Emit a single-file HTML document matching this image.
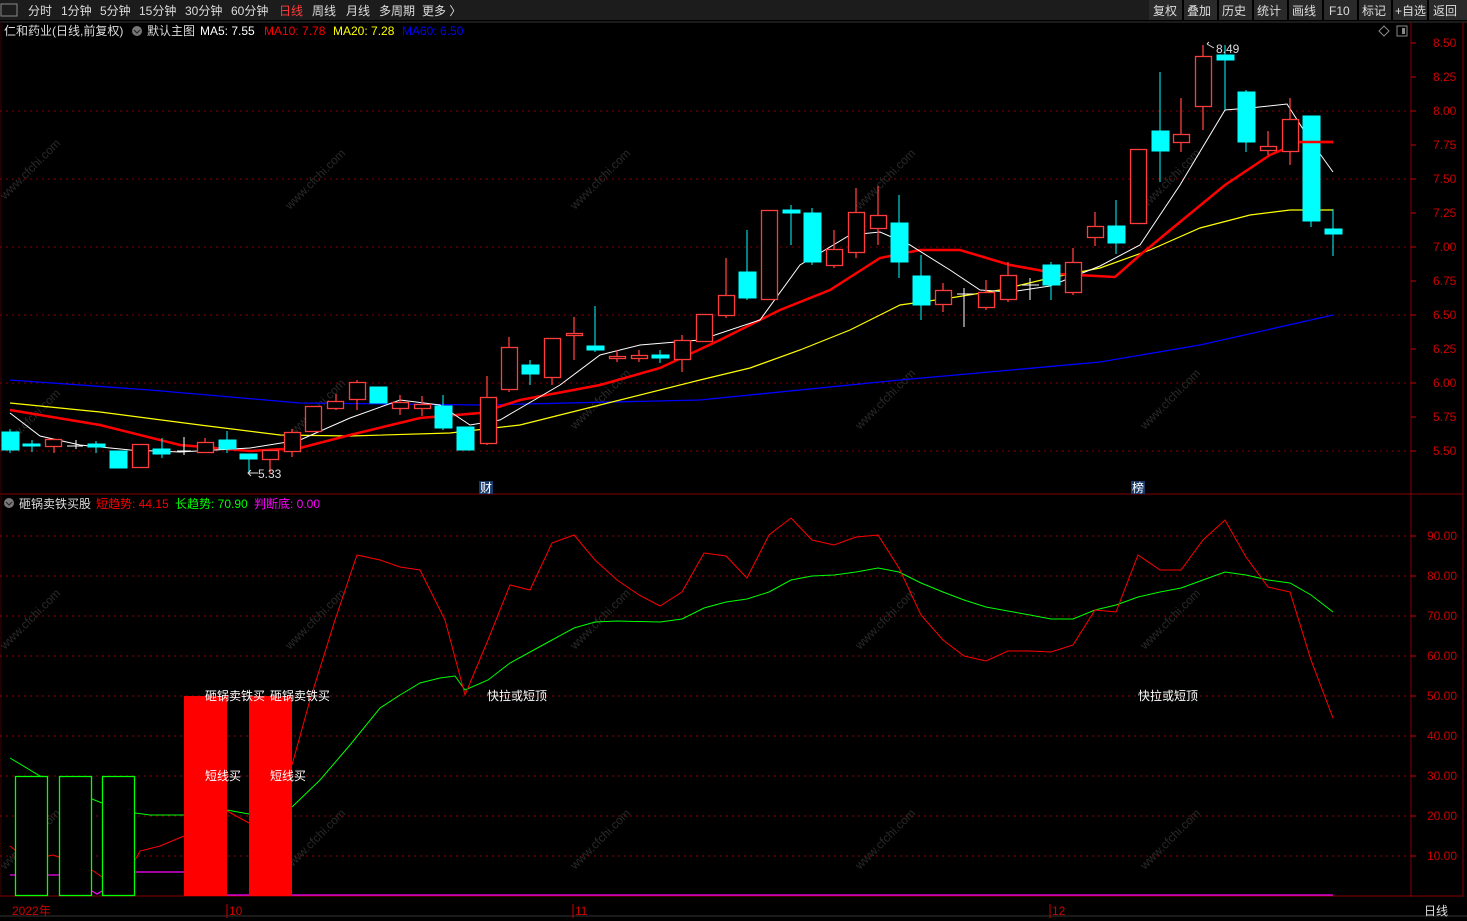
<!DOCTYPE html>
<html><head><meta charset="utf-8"><style>
html,body{margin:0;padding:0;background:#000;width:1467px;height:921px;overflow:hidden;font-family:"Liberation Sans","Noto Sans CJK SC",sans-serif;}
svg{display:block}
text{font-family:"Liberation Sans","Noto Sans CJK SC",sans-serif;font-size:12px}
</style></head><body>
<svg width="1467" height="921" viewBox="0 0 1467 921" xmlns="http://www.w3.org/2000/svg">
<rect width="1467" height="921" fill="#000"/>
<!-- top bar -->
<rect x="0" y="0" width="1467" height="20" fill="#1c1c1c"/>
<rect x="1" y="4" width="16" height="12" fill="none" stroke="#888" stroke-width="1"/>
<g fill="#ddd" font-size="12">
<text x="28" y="15">分时</text><text x="61" y="15">1分钟</text><text x="100" y="15">5分钟</text><text x="139" y="15">15分钟</text><text x="185" y="15">30分钟</text><text x="231" y="15">60分钟</text>
<text x="279" y="15" fill="#ff3c3c">日线</text><text x="312" y="15">周线</text><text x="346" y="15">月线</text><text x="379" y="15">多周期</text><text x="422" y="15">更多 〉</text>
</g>
<g fill="#ddd">
<rect x="1149" y="0" width="318" height="20" fill="#2a2a2a"/>
<text x="1153" y="15">复权</text><text x="1187" y="15">叠加</text><text x="1222" y="15">历史</text><text x="1257" y="15">统计</text><text x="1292" y="15">画线</text><text x="1329" y="15">F10</text><text x="1362" y="15">标记</text><text x="1395" y="15">+自选</text><text x="1433" y="15">返回</text>
<g stroke="#000" stroke-width="2"><line x1="1183" y1="0" x2="1183" y2="20"/><line x1="1218" y1="0" x2="1218" y2="20"/><line x1="1253" y1="0" x2="1253" y2="20"/><line x1="1288" y1="0" x2="1288" y2="20"/><line x1="1323" y1="0" x2="1323" y2="20"/><line x1="1358" y1="0" x2="1358" y2="20"/><line x1="1392" y1="0" x2="1392" y2="20"/><line x1="1428" y1="0" x2="1428" y2="20"/></g>
</g>
<!-- legend -->
<text x="4" y="35" fill="#ddd">仁和药业(日线,前复权)</text>
<circle cx="137" cy="31" r="5" fill="#777"/><path d="M134 30 l3 3 l3 -3" stroke="#222" fill="none"/>
<text x="147" y="35" fill="#ddd">默认主图</text>
<text x="200" y="35" fill="#fff">MA5: 7.55</text>
<text x="264" y="35" fill="#f00">MA10: 7.78</text>
<text x="333" y="35" fill="#ff0">MA20: 7.28</text>
<text x="402" y="35" fill="#00f">MA60: 6.50</text>
<path d="M1384 26 l5 5 l-5 5 l-5 -5z" fill="none" stroke="#888"/>
<rect x="1397" y="26" width="10" height="10" fill="none" stroke="#888"/><rect x="1402" y="28" width="3" height="6" fill="#888"/>
<!-- frame -->
<line x1="0" y1="22" x2="1467" y2="22" stroke="#333"/>
<line x1="1411" y1="22" x2="1411" y2="897" stroke="#800"/>
<line x1="1463" y1="22" x2="1463" y2="897" stroke="#800"/>
<line x1="0" y1="494" x2="1463" y2="494" stroke="#800"/>
<line x1="0" y1="896" x2="1463" y2="896" stroke="#800"/>
<line x1="1" y1="22" x2="1" y2="896" stroke="#400"/>
<!-- price grid -->
<g stroke="#800" stroke-dasharray="2,4">
<line x1="0" y1="111" x2="1411" y2="111"/><line x1="0" y1="179" x2="1411" y2="179"/><line x1="0" y1="247" x2="1411" y2="247"/><line x1="0" y1="315" x2="1411" y2="315"/><line x1="0" y1="383" x2="1411" y2="383"/><line x1="0" y1="451" x2="1411" y2="451"/>
</g>
<g fill="#c00" font-size="12">
<text x="1433" y="47">8.50</text><text x="1433" y="81">8.25</text><text x="1433" y="115">8.00</text><text x="1433" y="149">7.75</text><text x="1433" y="183">7.50</text><text x="1433" y="217">7.25</text><text x="1433" y="251">7.00</text><text x="1433" y="285">6.75</text><text x="1433" y="319">6.50</text><text x="1433" y="353">6.25</text><text x="1433" y="387">6.00</text><text x="1433" y="421">5.75</text><text x="1433" y="455">5.50</text>
</g>
<g stroke="#c00"><line x1="1411" y1="43" x2="1416" y2="43"/><line x1="1411" y1="77" x2="1416" y2="77"/><line x1="1411" y1="111" x2="1416" y2="111"/><line x1="1411" y1="145" x2="1416" y2="145"/><line x1="1411" y1="179" x2="1416" y2="179"/><line x1="1411" y1="213" x2="1416" y2="213"/><line x1="1411" y1="247" x2="1416" y2="247"/><line x1="1411" y1="281" x2="1416" y2="281"/><line x1="1411" y1="315" x2="1416" y2="315"/><line x1="1411" y1="349" x2="1416" y2="349"/><line x1="1411" y1="383" x2="1416" y2="383"/><line x1="1411" y1="417" x2="1416" y2="417"/><line x1="1411" y1="451" x2="1416" y2="451"/></g>
<!-- watermarks -->
<g fill="#2a2a2a" font-size="24" font-family="Liberation Sans">
<text transform="translate(5,200) rotate(-45)">www.cfchi.com</text>
<text transform="translate(290,210) rotate(-45)">www.cfchi.com</text>
<text transform="translate(575,210) rotate(-45)">www.cfchi.com</text>
<text transform="translate(860,210) rotate(-45)">www.cfchi.com</text>
<text transform="translate(1145,210) rotate(-45)">www.cfchi.com</text>
<text transform="translate(5,450) rotate(-45)">www.cfchi.com</text>
<text transform="translate(290,440) rotate(-45)">www.cfchi.com</text>
<text transform="translate(575,430) rotate(-45)">www.cfchi.com</text>
<text transform="translate(860,430) rotate(-45)">www.cfchi.com</text>
<text transform="translate(1145,430) rotate(-45)">www.cfchi.com</text>
<text transform="translate(5,650) rotate(-45)">www.cfchi.com</text>
<text transform="translate(290,650) rotate(-45)">www.cfchi.com</text>
<text transform="translate(575,650) rotate(-45)">www.cfchi.com</text>
<text transform="translate(860,650) rotate(-45)">www.cfchi.com</text>
<text transform="translate(1145,650) rotate(-45)">www.cfchi.com</text>
<text transform="translate(5,870) rotate(-45)">www.cfchi.com</text>
<text transform="translate(290,870) rotate(-45)">www.cfchi.com</text>
<text transform="translate(575,870) rotate(-45)">www.cfchi.com</text>
<text transform="translate(860,870) rotate(-45)">www.cfchi.com</text>
<text transform="translate(1145,870) rotate(-45)">www.cfchi.com</text>
</g>
<!-- MA lines -->
<polyline fill="none" stroke="#00f" stroke-width="1.3" points="10,380 150,390 300,403 480,405 700,400 900,380 1100,362 1200,345 1333,315"/>
<polyline fill="none" stroke="#ff0" stroke-width="1.2" points="10,403 100,412 200,425 280,435 350,436 450,433 520,425 600,405 700,380 750,368 800,350 850,330 900,305 950,298 1000,290 1050,278 1100,268 1150,250 1200,228 1250,215 1290,210 1333,210"/>
<polyline fill="none" stroke="#f00" stroke-width="2.5" points="10,410 100,425 180,445 250,451 300,448 350,435 420,418 480,413 520,400 600,385 660,368 720,340 780,310 830,290 880,258 920,250 960,250 1010,265 1060,274 1115,277 1140,255 1180,222 1225,185 1270,155 1300,142 1333,142"/>
<polyline fill="none" stroke="#fff" stroke-width="1" points="10,413 40,436 80,445 130,450 180,452 250,448 300,440 350,418 400,400 440,405 470,425 500,420 560,385 600,355 640,345 700,340 760,320 800,265 850,235 880,232 910,245 950,270 980,290 1010,292 1050,286 1100,266 1140,245 1180,185 1225,110 1250,108 1287,104 1310,140 1333,172"/>
<!-- candles -->
<g stroke="#00ffff" fill="#00ffff">
<line x1="10" y1="429" x2="10" y2="453"/><rect x="2" y="432" width="17" height="18"/>
<line x1="32" y1="440" x2="32" y2="452"/><rect x="23" y="444" width="17" height="2"/>
<line x1="96" y1="441" x2="96" y2="453"/><rect x="88" y="444" width="17" height="3"/>
<rect x="110" y="451" width="17" height="17"/>
<line x1="162" y1="438" x2="162" y2="458"/><rect x="153" y="449" width="17" height="5"/>
<line x1="227" y1="431" x2="227" y2="453"/><rect x="219" y="440" width="17" height="9"/>
<line x1="249" y1="454" x2="249" y2="474"/><rect x="240" y="454" width="17" height="5"/>
<rect x="370" y="387" width="17" height="16"/>
<line x1="443" y1="395" x2="443" y2="430"/><rect x="435" y="406" width="17" height="22"/>
<rect x="457" y="427" width="17" height="23"/>
<line x1="530" y1="360" x2="530" y2="385"/><rect x="522" y="365" width="17" height="9"/>
<line x1="595" y1="306" x2="595" y2="352"/><rect x="587" y="346" width="17" height="4"/>
<line x1="660" y1="350" x2="660" y2="363"/><rect x="652" y="355" width="17" height="3"/>
<line x1="747" y1="230" x2="747" y2="300"/><rect x="739" y="272" width="17" height="26"/>
<line x1="791" y1="205" x2="791" y2="245"/><rect x="783" y="210" width="17" height="3"/>
<line x1="812" y1="208" x2="812" y2="265"/><rect x="804" y="213" width="17" height="49"/>
<line x1="899" y1="195" x2="899" y2="278"/><rect x="891" y="223" width="17" height="39"/>
<line x1="921" y1="255" x2="921" y2="320"/><rect x="913" y="276" width="17" height="29"/>
<line x1="1051" y1="262" x2="1051" y2="300"/><rect x="1043" y="265" width="17" height="20"/>
<line x1="1116" y1="200" x2="1116" y2="254"/><rect x="1108" y="226" width="17" height="17"/>
<line x1="1160" y1="72" x2="1160" y2="182"/><rect x="1152" y="131" width="17" height="20"/>
<line x1="1225" y1="45" x2="1225" y2="110"/><rect x="1217" y="55" width="17" height="5"/>
<line x1="1246" y1="90" x2="1246" y2="152"/><rect x="1238" y="92" width="17" height="50"/>
<line x1="1311" y1="116" x2="1311" y2="227"/><rect x="1303" y="116" width="17" height="105"/>
<line x1="1333" y1="209" x2="1333" y2="256"/><rect x="1325" y="229" width="17" height="5"/>
</g>
<g stroke="#fff" fill="none">
<line x1="67" y1="446" x2="83" y2="446"/><line x1="76" y1="440" x2="76" y2="449"/>
<line x1="177" y1="451" x2="191" y2="451"/><line x1="184" y1="437" x2="184" y2="455"/>
<line x1="957" y1="294" x2="974" y2="294"/><line x1="964" y1="288" x2="964" y2="327"/>
<line x1="1022" y1="285" x2="1039" y2="285"/><line x1="1030" y1="278" x2="1030" y2="300"/>
</g>
<g stroke="#ff3c3c" fill="#000" stroke-width="1.3">
<line x1="54" y1="446" x2="54" y2="453"/><rect x="45.5" y="439.5" width="16" height="7"/>
<rect x="132.5" y="444.5" width="16" height="23"/>
<line x1="205" y1="438" x2="205" y2="442"/><rect x="197.5" y="442.5" width="16" height="10"/>
<line x1="270" y1="459" x2="270" y2="474"/><rect x="262.5" y="450.5" width="16" height="9"/>
<line x1="292" y1="429" x2="292" y2="457"/><rect x="284.5" y="432.5" width="16" height="19"/>
<rect x="305.5" y="406.5" width="16" height="25"/>
<line x1="336" y1="394" x2="336" y2="410"/><rect x="327.5" y="401.5" width="16" height="7"/>
<line x1="357" y1="380" x2="357" y2="410"/><rect x="349.5" y="382.5" width="16" height="17"/>
<line x1="400" y1="395" x2="400" y2="415"/><rect x="392.5" y="402.5" width="16" height="6"/>
<line x1="422" y1="396" x2="422" y2="416"/><rect x="414.5" y="404.5" width="16" height="4"/>
<line x1="487" y1="376" x2="487" y2="445"/><rect x="480.5" y="397.5" width="16" height="46"/>
<line x1="509" y1="337" x2="509" y2="392"/><rect x="501.5" y="347.5" width="16" height="42"/>
<line x1="552" y1="338" x2="552" y2="385"/><rect x="544.5" y="338.5" width="16" height="39"/>
<line x1="574" y1="317" x2="574" y2="360"/><rect x="566.5" y="333.5" width="16" height="2"/>
<line x1="617" y1="350" x2="617" y2="362"/><rect x="609.5" y="356.5" width="16" height="2"/>
<line x1="639" y1="350" x2="639" y2="362"/><rect x="631.5" y="355.5" width="16" height="3"/>
<line x1="682" y1="335" x2="682" y2="372"/><rect x="674.5" y="340.5" width="16" height="19"/>
<rect x="696.5" y="314.5" width="16" height="27"/>
<line x1="726" y1="258" x2="726" y2="318"/><rect x="718.5" y="295.5" width="16" height="20"/>
<rect x="761.5" y="210.5" width="16" height="89"/>
<line x1="834" y1="230" x2="834" y2="268"/><rect x="826.5" y="249.5" width="16" height="16"/>
<line x1="856" y1="188" x2="856" y2="258"/><rect x="848.5" y="212.5" width="16" height="40"/>
<line x1="878" y1="186" x2="878" y2="245"/><rect x="870.5" y="215.5" width="16" height="13"/>
<line x1="943" y1="283" x2="943" y2="312"/><rect x="935.5" y="290.5" width="16" height="14"/>
<line x1="986" y1="280" x2="986" y2="310"/><rect x="978.5" y="292.5" width="16" height="15"/>
<line x1="1008" y1="262" x2="1008" y2="302"/><rect x="1000.5" y="275.5" width="16" height="24"/>
<line x1="1073" y1="248" x2="1073" y2="295"/><rect x="1065.5" y="262.5" width="16" height="30"/>
<line x1="1095" y1="212" x2="1095" y2="246"/><rect x="1087.5" y="226.5" width="16" height="11"/>
<rect x="1130.5" y="149.5" width="16" height="74"/>
<line x1="1181" y1="98" x2="1181" y2="152"/><rect x="1173.5" y="134.5" width="16" height="8"/>
<line x1="1203" y1="45" x2="1203" y2="130"/><rect x="1195.5" y="56.5" width="16" height="50"/>
<line x1="1268" y1="131" x2="1268" y2="155"/><rect x="1260.5" y="146.5" width="16" height="4"/>
<line x1="1290" y1="98" x2="1290" y2="165"/><rect x="1282.5" y="119.5" width="16" height="32"/>
</g>
<polyline fill="none" stroke="#f00" stroke-width="2.5" points="1300,142 1333,142"/>
<text x="258" y="478" fill="#ddd">5.33</text><path d="M258 473 h-10 m3 -3 l-3 3 l3 3" stroke="#ddd" fill="none"/>
<text x="1216" y="53" fill="#ddd">8.49</text><path d="M1214 48 l-7 -4 m0 0 l2 -2" stroke="#ddd" fill="none"/>
<rect x="479" y="481" width="14" height="13" fill="#1a3a6a"/><text x="480" y="492" fill="#fff">财</text>
<rect x="1131" y="481" width="14" height="13" fill="#1a3a6a"/><text x="1132" y="492" fill="#fff">榜</text>
<!-- lower legend -->
<circle cx="9" cy="503" r="5" fill="#777"/><path d="M6 502 l3 3 l3 -3" stroke="#222" fill="none"/>
<text x="19" y="508" fill="#ddd">砸锅卖铁买股</text>
<text x="96" y="508" fill="#f00">短趋势: 44.15</text>
<text x="175" y="508" fill="#0f0">长趋势: 70.90</text>
<text x="254" y="508" fill="#f0f">判断底: 0.00</text>
<!-- lower grid -->
<g stroke="#900" stroke-dasharray="2,4">
<line x1="0" y1="536" x2="1411" y2="536"/><line x1="0" y1="576" x2="1411" y2="576"/><line x1="0" y1="616" x2="1411" y2="616"/><line x1="0" y1="656" x2="1411" y2="656"/><line x1="0" y1="696" x2="1411" y2="696"/><line x1="0" y1="736" x2="1411" y2="736"/><line x1="0" y1="776" x2="1411" y2="776"/><line x1="0" y1="816" x2="1411" y2="816"/><line x1="0" y1="856" x2="1411" y2="856"/>
</g>
<g fill="#c00"><text x="1427" y="540">90.00</text><text x="1427" y="580">80.00</text><text x="1427" y="620">70.00</text><text x="1427" y="660">60.00</text><text x="1427" y="700">50.00</text><text x="1427" y="740">40.00</text><text x="1427" y="780">30.00</text><text x="1427" y="820">20.00</text><text x="1427" y="860">10.00</text></g>
<g stroke="#c00"><line x1="1411" y1="536" x2="1416" y2="536"/><line x1="1411" y1="576" x2="1416" y2="576"/><line x1="1411" y1="616" x2="1416" y2="616"/><line x1="1411" y1="656" x2="1416" y2="656"/><line x1="1411" y1="696" x2="1416" y2="696"/><line x1="1411" y1="736" x2="1416" y2="736"/><line x1="1411" y1="776" x2="1416" y2="776"/><line x1="1411" y1="816" x2="1416" y2="816"/><line x1="1411" y1="856" x2="1416" y2="856"/></g>
<!-- lower lines -->
<polyline fill="none" stroke="#f0f" stroke-width="1.2" points="10,875 15,875"/>
<polyline fill="none" stroke="#f0f" stroke-width="1.2" points="48,875 60,875"/>
<polyline fill="none" stroke="#f0f" stroke-width="1.2" points="92,891 97,894 102,891"/>
<polyline fill="none" stroke="#f0f" stroke-width="1.2" points="135,872 184,872"/>
<polyline fill="none" stroke="#f0f" stroke-width="1.2" points="227,895 249,895"/>
<polyline fill="none" stroke="#f0f" stroke-width="1.2" points="292,895 1333,895"/>
<polyline fill="none" stroke="#0f0" stroke-width="1" points="10,758 40,776 48,778"/>
<polyline fill="none" stroke="#0f0" stroke-width="1" points="59,780 92,786"/>
<polyline fill="none" stroke="#0f0" stroke-width="1" points="92,799 102,803"/>
<polyline fill="none" stroke="#0f0" stroke-width="1" points="135,813 150,815 184,815"/>
<polyline fill="none" stroke="#0f0" stroke-width="1" points="227,810 249,814"/>
<polyline fill="none" stroke="#0f0" stroke-width="1" points="292,807 320,780 350,745 380,708 400,695 420,683 440,678 455,676 465,690 488,680 510,663 530,652 552,640 574,628 595,622 617,621 660,622 682,619 704,608 726,602 747,599 769,592 791,580 812,576 834,575 856,572 878,568 899,572 921,583 943,592 964,600 986,607 1008,611 1030,615 1051,619 1073,619 1095,610 1116,605 1138,597 1160,592 1181,588 1203,580 1225,572 1246,575 1268,580 1290,583 1311,595 1333,612"/>
<polyline fill="none" stroke="#f00" stroke-width="1" points="10,846 15,850"/>
<polyline fill="none" stroke="#f00" stroke-width="1" points="48,856 53,855 59,857"/>
<polyline fill="none" stroke="#f00" stroke-width="1" points="92,870 102,877"/>
<polyline fill="none" stroke="#f00" stroke-width="1" points="135,860 140,851 160,846 184,836"/>
<polyline fill="none" stroke="#f00" stroke-width="1" points="227,811 249,823"/>
<polyline fill="none" stroke="#f00" stroke-width="1" points="292,765 310,700 335,620 357,555 380,560 400,567 420,570 445,620 465,695 488,640 510,585 530,590 552,543 574,535 595,560 617,580 639,595 660,606 682,592 704,553 726,556 747,578 769,535 791,518 812,540 834,545 856,537 878,535 899,568 921,615 943,640 964,656 986,661 1008,651 1030,651 1051,652 1073,645 1095,610 1116,612 1138,555 1160,570 1181,570 1203,540 1225,520 1246,557 1268,587 1290,592 1311,660 1333,718"/>
<g fill="#000" stroke="#0f0" stroke-width="1.3">
<rect x="15.5" y="776.5" width="32" height="119"/>
<rect x="59.5" y="776.5" width="32" height="119"/>
<rect x="102.5" y="776.5" width="32" height="119"/>
</g>
<rect x="184" y="696" width="43" height="200" fill="#f00"/>
<rect x="249" y="696" width="43" height="200" fill="#f00"/>
<g fill="#fff">
<text x="205" y="700">砸锅卖铁买</text><text x="270" y="700">砸锅卖铁买</text>
<text x="205" y="780">短线买</text><text x="270" y="780">短线买</text>
<text x="487" y="700">快拉或短顶</text><text x="1138" y="700">快拉或短顶</text>
</g>
<!-- bottom axis -->
<line x1="0" y1="916" x2="1467" y2="916" stroke="#333"/>
<text x="12" y="915" fill="#c00">2022年</text>
<line x1="227" y1="904" x2="227" y2="918" stroke="#c00"/><text x="229" y="915" fill="#c00">10</text>
<line x1="573" y1="904" x2="573" y2="918" stroke="#c00"/><text x="575" y="915" fill="#c00">11</text>
<line x1="1050" y1="904" x2="1050" y2="918" stroke="#c00"/><text x="1052" y="915" fill="#c00">12</text>
<text x="1424" y="915" fill="#ddd">日线</text>
</svg>
</body></html>
